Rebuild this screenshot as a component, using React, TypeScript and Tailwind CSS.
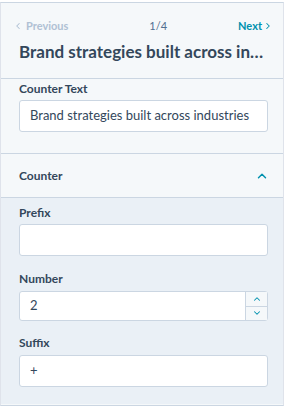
import { ChevronLeft, ChevronRight, ChevronUp, ChevronDown } from "lucide-react"

const font = { fontFamily: "Lato, 'Noto Sans', sans-serif" }

function Label({ children }: { children: React.ReactNode }) {
  return <div className="text-[12px] font-bold leading-[16px] text-[#33475b]">{children}</div>
}

function TextInput({ value }: { value: string }) {
  return (
    <div className="flex h-[32px] items-center overflow-hidden whitespace-nowrap rounded-[3px] border border-[#cbd6e2] bg-white px-[10px] text-[13px] text-[#33475b]">
      {value}
    </div>
  )
}

export default function App() {
  return (
    <div className="h-[407px] w-[284px] bg-white pt-[2px]" style={font}>
      <div className="h-[404px] border border-[#cbd6e2] border-l-[#dfe3eb] border-r-[#dfe3eb] bg-[#f5f8fa]">
        {/* navigation header */}
        <div className="border-b border-[#cbd6e2] pl-[18px] pr-[10px] pt-[16px]">
          <div className="flex items-center justify-between text-[11px] leading-[14px]">
            <span className="flex items-center gap-[3px] font-bold text-[#b0c1d4]">
              <ChevronLeft size={10} strokeWidth={2.5} className="-ml-[6px]" />
              Previous
            </span>
            <span className="pl-[10px] text-[#516f90]">1/4</span>
            <span className="flex items-center gap-[1px] font-bold text-[#0091ae]">
              Next
              <ChevronRight size={10} strokeWidth={2.5} />
            </span>
          </div>
          <div className="truncate pb-[15px] pr-[8px] pt-[8px] text-[17px] font-bold leading-[22px] text-[#33475b]">
            Brand strategies built across industries
          </div>
        </div>

        {/* counter text */}
        <div className="border-b border-[#cbd6e2] pb-[21px] pl-[18px] pr-[15px] pt-[2px]">
          <Label>Counter Text</Label>
          <div className="mt-[3px]">
            <TextInput value="Brand strategies built across industries" />
          </div>
        </div>

        {/* counter group */}
        <div className="flex h-[44px] items-center justify-between border-b border-[#cbd6e2] pl-[18px] pr-[15px]">
          <span className="text-[12px] font-bold text-[#33475b]">Counter</span>
          <ChevronUp size={14} strokeWidth={2.5} className="mr-[-1px] text-[#0091ae]" />
        </div>

        <div className="flex h-[206px] flex-col bg-[#eaf0f6] pl-[18px] pr-[15px] pt-[7px]">
          <Label>Prefix</Label>
          <div className="mt-[3px]">
            <TextInput value="" />
          </div>

          <div className="mt-[15px]">
            <Label>Number</Label>
          </div>
          <div className="mt-[4px] flex h-[30px] rounded-[3px] border border-[#cbd6e2] bg-white">
            <div className="flex flex-1 items-center px-[10px] text-[13px] text-[#33475b]">2</div>
            <div className="flex w-[22px] flex-col border-l border-[#cbd6e2] bg-[#f5f8fa]">
              <div className="flex flex-1 items-center justify-center border-b border-[#cbd6e2] text-[#0091ae]">
                <ChevronUp size={10} strokeWidth={2.5} />
              </div>
              <div className="flex flex-1 items-center justify-center text-[#0091ae]">
                <ChevronDown size={10} strokeWidth={2.5} />
              </div>
            </div>
          </div>

          <div className="mt-[14px]">
            <Label>Suffix</Label>
          </div>
          <div className="mt-[4px]">
            <TextInput value="+" />
          </div>
        </div>
      </div>
    </div>
  )
}
